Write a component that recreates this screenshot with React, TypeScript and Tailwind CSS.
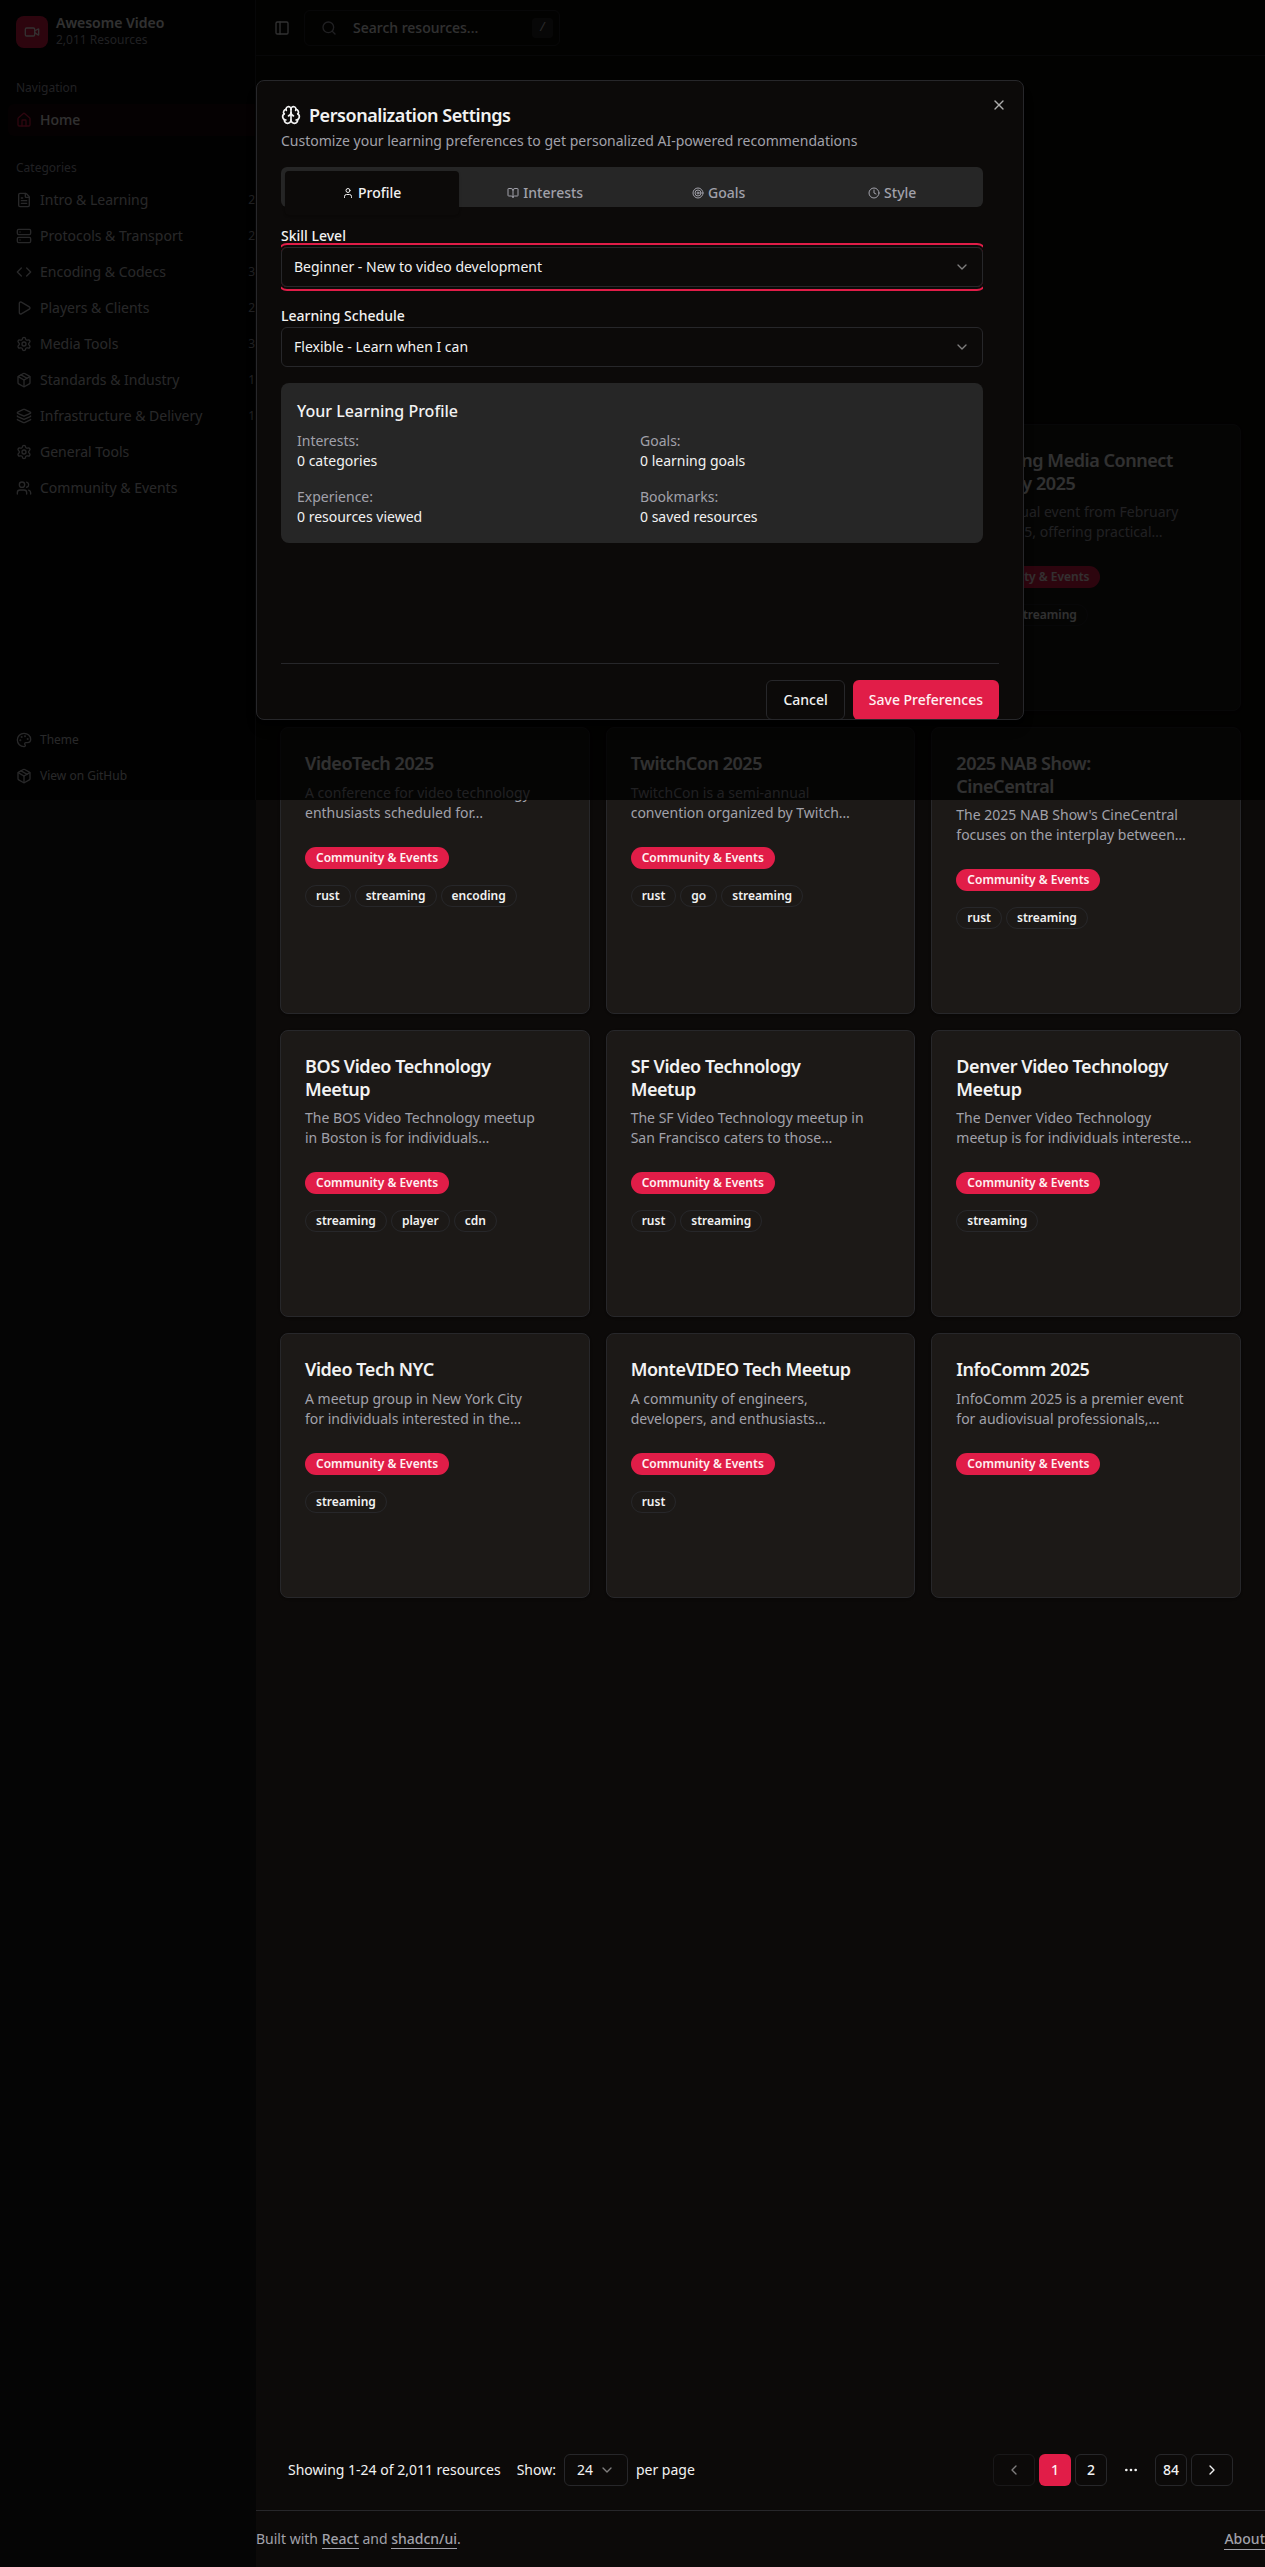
import React from "react";
import {
  BookOpen,
  Brain,
  ChevronDown,
  ChevronLeft,
  ChevronRight,
  Clock,
  Code,
  Ellipsis,
  FileText,
  House,
  Layers,
  Package,
  Palette,
  PanelLeft,
  Play,
  Search,
  Server,
  Settings,
  Target,
  User,
  Users,
  Video,
  X,
  type LucideIcon,
} from "lucide-react";

type Category = { label: string; icon: LucideIcon; count?: string };

const categories: Category[] = [
  { label: "Intro & Learning", icon: FileText, count: "2" },
  { label: "Protocols & Transport", icon: Server, count: "2" },
  { label: "Encoding & Codecs", icon: Code, count: "3" },
  { label: "Players & Clients", icon: Play, count: "2" },
  { label: "Media Tools", icon: Settings, count: "3" },
  { label: "Standards & Industry", icon: Package, count: "1" },
  { label: "Infrastructure & Delivery", icon: Layers, count: "1" },
  { label: "General Tools", icon: Settings },
  { label: "Community & Events", icon: Users },
];

type Resource = { title: string[]; text: string[]; tags: string[] };

const featured: Resource = {
  title: ["Streaming Media Connect", "February 2025"],
  text: ["A free virtual event from February", "24-27, 2025, offering practical…"],
  tags: ["rust", "streaming"],
};

const rows: { height: string; items: Resource[] }[] = [
  {
    height: "h-[287px]",
    items: [
      {
        title: ["VideoTech 2025"],
        text: ["A conference for video technology", "enthusiasts scheduled for…"],
        tags: ["rust", "streaming", "encoding"],
      },
      {
        title: ["TwitchCon 2025"],
        text: ["TwitchCon is a semi-annual", "convention organized by Twitch…"],
        tags: ["rust", "go", "streaming"],
      },
      {
        title: ["2025 NAB Show:", "CineCentral"],
        text: ["The 2025 NAB Show's CineCentral", "focuses on the interplay between…"],
        tags: ["rust", "streaming"],
      },
    ],
  },
  {
    height: "h-[287px]",
    items: [
      {
        title: ["BOS Video Technology", "Meetup"],
        text: ["The BOS Video Technology meetup", "in Boston is for individuals…"],
        tags: ["streaming", "player", "cdn"],
      },
      {
        title: ["SF Video Technology", "Meetup"],
        text: ["The SF Video Technology meetup in", "San Francisco caters to those…"],
        tags: ["rust", "streaming"],
      },
      {
        title: ["Denver Video Technology", "Meetup"],
        text: ["The Denver Video Technology", "meetup is for individuals intereste…"],
        tags: ["streaming"],
      },
    ],
  },
  {
    height: "h-[264.5px]",
    items: [
      {
        title: ["Video Tech NYC"],
        text: ["A meetup group in New York City", "for individuals interested in the…"],
        tags: ["streaming"],
      },
      {
        title: ["MonteVIDEO Tech Meetup"],
        text: ["A community of engineers,", "developers, and enthusiasts…"],
        tags: ["rust"],
      },
      {
        title: ["InfoComm 2025"],
        text: ["InfoComm 2025 is a premier event", "for audiovisual professionals,…"],
        tags: [],
      },
    ],
  },
];

function Lines({ lines }: { lines: string[] }) {
  return (
    <>
      {lines.map((line) => (
        <span key={line} className="block whitespace-nowrap">
          {line}
        </span>
      ))}
    </>
  );
}

function ResourceCard({ item }: { item: Resource }) {
  return (
    <article className="h-full rounded-lg border border-[#27272a] bg-[#1c1917] p-6 shadow-sm">
      <h3 className="text-lg leading-[22.5px] font-semibold tracking-tight">
        <Lines lines={item.title} />
      </h3>
      <p className="mt-2 text-sm text-[#a1a1aa]">
        <Lines lines={item.text} />
      </p>
      <div className="mt-6 flex">
        <span className="rounded-full border border-transparent bg-[#e11d48] px-2.5 py-0.5 text-xs font-semibold text-[#fff1f2]">
          Community &amp; Events
        </span>
      </div>
      <div className="mt-4 flex gap-1">
        {item.tags.map((tag) => (
          <span
            key={tag}
            className="rounded-full border border-[#27272a] px-2.5 py-0.5 text-xs font-semibold"
          >
            {tag}
          </span>
        ))}
      </div>
    </article>
  );
}

function Sidebar() {
  return (
    <aside className="w-64 shrink-0 bg-[#050505]">
      <div className="flex h-[800px] flex-col overflow-hidden border-r border-[#27272a]">
        <div className="flex h-16 items-center gap-2 px-4">
          <div className="flex size-8 items-center justify-center rounded-lg bg-[#e11d48] text-[#fff1f2]">
            <Video className="size-4" />
          </div>
          <div className="flex flex-col gap-0.5">
            <span className="text-sm leading-none font-semibold">Awesome Video</span>
            <span className="text-xs text-[#a1a1aa]">2,011 Resources</span>
          </div>
        </div>

        <div className="p-2">
          <div className="flex h-8 items-center px-2 text-xs text-[#a1a1aa]">Navigation</div>
          <div className="-mr-2 flex h-8 items-center gap-2 rounded-l-md bg-[#e11d48]/10 px-2 text-sm font-medium">
            <House className="size-4 text-[#e11d48]" />
            Home
          </div>
        </div>

        <div className="p-2">
          <div className="flex h-8 items-center px-2 text-xs text-[#a1a1aa]">Categories</div>
          <ul className="flex flex-col gap-1">
            {categories.map(({ label, icon: Icon, count }) => (
              <li
                key={label}
                className="-mr-2 flex h-8 items-center gap-2 pl-2 text-sm text-[#c8c8cc]"
              >
                <Icon className="size-4 shrink-0" />
                <span className="flex-1">{label}</span>
                {count && <span className="text-xs text-[#a1a1aa]">{count}</span>}
              </li>
            ))}
          </ul>
        </div>

        <div className="mt-auto flex flex-col gap-1 p-2 text-xs text-[#c8c8cc]">
          <div className="flex h-8 items-center gap-2 px-2">
            <Palette className="size-4" />
            Theme
          </div>
          <div className="flex h-8 items-center gap-2 px-2">
            <Package className="size-4" />
            View on GitHub
          </div>
        </div>
      </div>
    </aside>
  );
}

function TopBar() {
  return (
    <header className="flex h-14 items-center gap-2 border-b border-[#27272a] px-3">
      <div className="flex size-7 items-center justify-center">
        <PanelLeft className="size-4" />
      </div>
      <div className="flex h-9 w-64 items-center rounded-md border border-[#27272a] pr-1.5 pl-4 text-sm">
        <Search className="mr-4 size-4 text-[#a1a1aa]" />
        <span className="flex-1 font-medium text-[#f2f2f2]">Search resources...</span>
        <kbd className="flex h-5 w-[21px] items-center justify-center rounded bg-[#262626] font-mono text-xs text-[#d4d4d8]">
          /
        </kbd>
      </div>
    </header>
  );
}

function PageButton({ children, className }: { children: React.ReactNode; className: string }) {
  return (
    <button
      className={`flex h-8 items-center justify-center rounded-md text-sm font-medium ${className}`}
    >
      {children}
    </button>
  );
}

function Pagination() {
  return (
    <div className="flex items-center justify-between px-8">
      <div className="flex items-center gap-2 text-sm">
        <span className="mr-2">Showing 1-24 of 2,011 resources</span>
        <span>Show:</span>
        <div className="flex h-8 w-16 items-center justify-between rounded-md border border-[#27272a] px-3">
          24
          <ChevronDown className="size-4 opacity-50" />
        </div>
        <span>per page</span>
      </div>
      <nav className="flex items-center gap-1">
        <PageButton className="border border-[#27272a] px-3 opacity-50">
          <ChevronLeft className="size-4" />
        </PageButton>
        <PageButton className="w-8 bg-[#e11d48] text-[#fff1f2]">1</PageButton>
        <PageButton className="w-8 border border-[#27272a]">2</PageButton>
        <PageButton className="px-3">
          <Ellipsis className="size-4" />
        </PageButton>
        <PageButton className="w-8 border border-[#27272a]">84</PageButton>
        <PageButton className="border border-[#27272a] px-3">
          <ChevronRight className="size-4" />
        </PageButton>
      </nav>
    </div>
  );
}

function FooterLink({ children }: { children: React.ReactNode }) {
  return (
    <a href="#" className="border-b border-[#a1a1aa] font-medium">
      {children}
    </a>
  );
}

const tabs: { label: string; icon: LucideIcon }[] = [
  { label: "Profile", icon: User },
  { label: "Interests", icon: BookOpen },
  { label: "Goals", icon: Target },
  { label: "Style", icon: Clock },
];

const stats = [
  ["Interests:", "0 categories"],
  ["Goals:", "0 learning goals"],
  ["Experience:", "0 resources viewed"],
  ["Bookmarks:", "0 saved resources"],
];

function SelectField({ label, value, focused }: { label: string; value: string; focused?: boolean }) {
  return (
    <div>
      <div className="leading-6">
        <label className="text-sm leading-none font-medium">{label}</label>
      </div>
      <button
        className={`flex h-10 w-full items-center justify-between rounded-md border border-[#27272a] px-3 text-sm ${
          focused ? "ring-2 ring-[#e11d48] ring-offset-2 ring-offset-[#0c0a09]" : ""
        }`}
      >
        {value}
        <ChevronDown className="size-4 opacity-50" />
      </button>
    </div>
  );
}

function PersonalizationDialog() {
  return (
    <div
      role="dialog"
      className="absolute top-20 left-64 flex h-[640px] w-3xl flex-col overflow-hidden rounded-lg border border-[#27272a] bg-[#0c0a09] px-6 pt-6 shadow-lg"
    >
      <X className="absolute top-4 right-4 size-4 opacity-70" />
      <h2 className="flex items-center gap-2 text-lg leading-none font-semibold tracking-tight">
        <Brain className="size-5" />
        Personalization Settings
      </h2>
      <p className="mt-1.5 text-sm text-[#a1a1aa]">
        Customize your learning preferences to get personalized AI-powered recommendations
      </p>

      <div className="mt-4 mr-4 h-[480px] shrink-0 overflow-hidden">
        <div className="grid h-10 grid-cols-4 rounded-md bg-[#262626] p-1 text-[#a1a1aa]">
          {tabs.map(({ label, icon: Icon }, i) => (
            <button
              key={label}
              className={`flex h-11 items-center justify-center gap-1 rounded-sm text-sm font-medium ${
                i === 0 ? "bg-[#0c0a09] text-[#f2f2f2] shadow-sm" : ""
              }`}
            >
              <Icon className="size-3" />
              {label}
            </button>
          ))}
        </div>
        <div className="mt-4 flex flex-col gap-4">
          <SelectField label="Skill Level" value="Beginner - New to video development" focused />
          <SelectField label="Learning Schedule" value="Flexible - Learn when I can" />
          <div className="rounded-lg bg-[#262626] p-4">
            <h4 className="font-medium">Your Learning Profile</h4>
            <dl className="mt-2 grid grid-cols-2 gap-4 text-sm">
              {stats.map(([name, value]) => (
                <div key={name}>
                  <dt className="text-[#a1a1aa]">{name}</dt>
                  <dd>{value}</dd>
                </div>
              ))}
            </dl>
          </div>
        </div>
      </div>

      <div className="mt-4 flex shrink-0 justify-end gap-2 border-t border-[#27272a] pt-4 text-sm font-medium">
        <button className="h-10 rounded-md border border-[#27272a] px-4">Cancel</button>
        <button className="h-10 rounded-md bg-[#e11d48] px-4 text-[#fff1f2]">
          Save Preferences
        </button>
      </div>
    </div>
  );
}

export default function App() {
  return (
    <div className="relative flex h-[2567px] w-full overflow-hidden bg-[#0c0a09] font-['Noto_Sans',sans-serif] text-[#f2f2f2]">
      <Sidebar />
      <div className="flex min-w-0 flex-1 flex-col">
        <TopBar />
        <main className="mt-[368px] flex flex-col gap-4 px-6">
          <div className="grid h-[287px] grid-cols-3 gap-4">
            <div className="col-start-3">
              <ResourceCard item={featured} />
            </div>
          </div>
          {rows.map((row, i) => (
            <div key={i} className={`grid grid-cols-3 gap-4 ${row.height}`}>
              {row.items.map((item) => (
                <ResourceCard key={item.title[0]} item={item} />
              ))}
            </div>
          ))}
        </main>
        <div className="mt-auto">
          <Pagination />
          <footer className="mt-6 flex h-[57px] items-center justify-between border-t border-[#27272a] text-sm text-[#a1a1aa]">
            <p>
              Built with <FooterLink>React</FooterLink> and <FooterLink>shadcn/ui</FooterLink>.
            </p>
            <FooterLink>About</FooterLink>
          </footer>
        </div>
      </div>

      <div className="absolute inset-x-0 top-0 h-[800px] bg-black/80" />
      <PersonalizationDialog />
    </div>
  );
}
